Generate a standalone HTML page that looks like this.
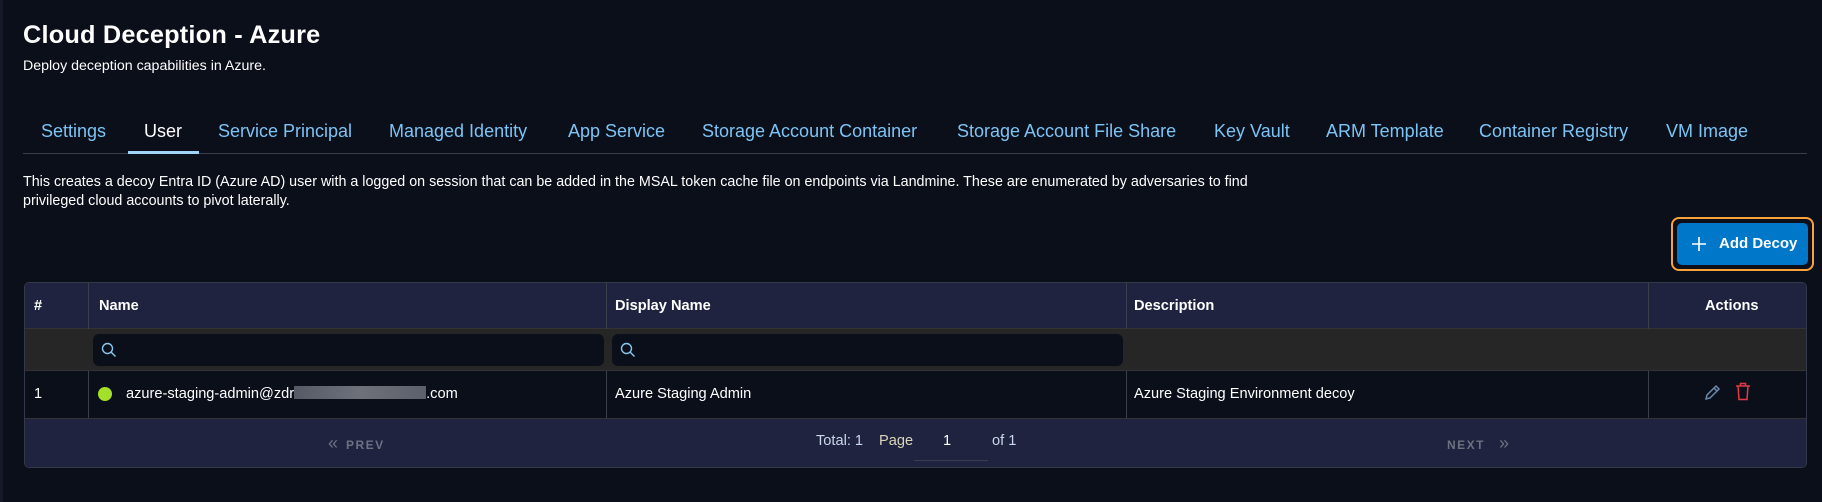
<!DOCTYPE html>
<html><head><meta charset="utf-8"><style>
*{box-sizing:border-box;margin:0;padding:0}
body{width:1822px;height:502px;background:#0b0f1a;color:#fff;font-family:"Liberation Sans",sans-serif;position:relative;overflow:hidden}
.a{position:absolute;white-space:nowrap}
.tab{position:absolute;top:121px;font-size:18px;color:#7cc4f5}
.cell{position:absolute;font-size:14.6px}
</style></head><body>
<div class="a" style="left:0;top:0;width:3px;height:502px;background:#151a28"></div>
<div class="a" style="left:23px;top:21px;font-size:25.3px;font-weight:bold;letter-spacing:0.2px">Cloud Deception - Azure</div>
<div class="a" style="left:23px;top:58px;font-size:14.2px">Deploy deception capabilities in Azure.</div>

<div class="tab" style="left:41px">Settings</div>
<div class="tab" style="left:144px;color:#fff">User</div>
<div class="tab" style="left:218px">Service Principal</div>
<div class="tab" style="left:389px">Managed Identity</div>
<div class="tab" style="left:568px">App Service</div>
<div class="tab" style="left:702px">Storage Account Container</div>
<div class="tab" style="left:957px">Storage Account File Share</div>
<div class="tab" style="left:1214px">Key Vault</div>
<div class="tab" style="left:1326px">ARM Template</div>
<div class="tab" style="left:1479px">Container Registry</div>
<div class="tab" style="left:1666px">VM Image</div>
<div class="a" style="left:23px;top:153px;width:1784px;height:1px;background:#3a3f4c"></div>
<div class="a" style="left:128px;top:151px;width:71px;height:3px;background:#9fd3f7"></div>

<div class="a" style="left:23px;top:173px;font-size:14.3px;line-height:19px">This creates a decoy Entra ID (Azure AD) user with a logged on session that can be added in the MSAL token cache file on endpoints via Landmine. These are enumerated by adversaries to find<br>privileged cloud accounts to pivot laterally.</div>

<div class="a" style="left:1671px;top:217px;width:143px;height:54px;border:2px solid #f7a23b;border-radius:8px"></div>
<div class="a" style="left:1677px;top:223px;width:131px;height:42px;background:#0077c8;border-radius:5px;font-size:15px;font-weight:bold;line-height:42px;padding-left:42px">Add Decoy</div>
<svg class="a" style="left:1691px;top:236px" width="16" height="16" viewBox="0 0 16 16"><path d="M8 1v14M1 8h14" stroke="#fff" stroke-width="1.6"/></svg>

<div class="a" style="left:24px;top:282px;width:1783px;height:186px;border:1px solid #33384a;border-radius:5px;overflow:hidden;background:#0b0f1a">
  <div class="a" style="left:0;top:0;width:100%;height:46px;background:#1f2340;border-bottom:1px solid #333"></div>
  <div class="a" style="left:0;top:46px;width:100%;height:42px;background:#262626;border-bottom:1px solid #333"></div>
  <div class="a" style="left:0;top:135px;width:100%;height:51px;background:#1f2340;border-top:1px solid #333"></div>
  <div class="a" style="left:63px;top:0;width:1px;height:46px;background:#3a3f4c"></div>
  <div class="a" style="left:581px;top:0;width:1px;height:46px;background:#3a3f4c"></div>
  <div class="a" style="left:1101px;top:0;width:1px;height:46px;background:#3a3f4c"></div>
  <div class="a" style="left:1623px;top:0;width:1px;height:46px;background:#3a3f4c"></div>
  <div class="a" style="left:63px;top:88px;width:1px;height:47px;background:#3a3f4c"></div>
  <div class="a" style="left:581px;top:88px;width:1px;height:47px;background:#3a3f4c"></div>
  <div class="a" style="left:1101px;top:88px;width:1px;height:47px;background:#3a3f4c"></div>
  <div class="a" style="left:1623px;top:88px;width:1px;height:47px;background:#3a3f4c"></div>
  <div class="cell a" style="left:9px;top:15px;font-weight:bold">#</div>
  <div class="cell a" style="left:74px;top:15px;font-weight:bold">Name</div>
  <div class="cell a" style="left:590px;top:15px;font-weight:bold">Display Name</div>
  <div class="cell a" style="left:1109px;top:15px;font-weight:bold">Description</div>
  <div class="cell a" style="left:1680px;top:15px;font-weight:bold">Actions</div>
  <div class="a" style="left:68px;top:51px;width:511px;height:32px;background:#0b0f1a;border-radius:6px"></div>
  <div class="a" style="left:587px;top:51px;width:511px;height:32px;background:#0b0f1a;border-radius:6px"></div>
  <svg class="a" style="left:76px;top:59px" width="16" height="16" viewBox="0 0 16 16"><circle cx="6.5" cy="6.5" r="5" fill="none" stroke="#8ac6ee" stroke-width="1.4"/><path d="M10 10l4.5 4.5" stroke="#8ac6ee" stroke-width="1.4"/></svg>
  <svg class="a" style="left:595px;top:59px" width="16" height="16" viewBox="0 0 16 16"><circle cx="6.5" cy="6.5" r="5" fill="none" stroke="#8ac6ee" stroke-width="1.4"/><path d="M10 10l4.5 4.5" stroke="#8ac6ee" stroke-width="1.4"/></svg>
  <div class="cell a" style="left:9px;top:103px">1</div>
  <div class="a" style="left:73px;top:104px;width:14px;height:14px;border-radius:50%;background:#a4e02a"></div>
  <div class="cell a" style="left:101px;top:103px">azure-staging-admin@zdr<span style="display:inline-block;width:132px;height:13px;background:linear-gradient(90deg,#555a66,#6e717a,#5c606a);vertical-align:-1px"></span>.com</div>
  <div class="cell a" style="left:590px;top:103px">Azure Staging Admin</div>
  <div class="cell a" style="left:1109px;top:103px">Azure Staging Environment decoy</div>
  <svg class="a" style="left:1678px;top:101px" width="18" height="18" viewBox="0 0 18 18"><path d="M3 15l1-4L13 2l3 3-9 9z M11 4l3 3" fill="none" stroke="#6a8bb0" stroke-width="1.5"/></svg>
  <svg class="a" style="left:1710px;top:99px" width="16" height="19" viewBox="0 0 16 19"><path d="M1 4h14M5.5 4V1.5h5V4M3 4l1 13.5h8L13 4" fill="none" stroke="#e23b46" stroke-width="1.5"/></svg>
  <div class="a" style="left:303px;top:150px;font-size:18px;color:#6b7280">«</div>
  <div class="a" style="left:321px;top:155px;font-size:12px;font-weight:bold;letter-spacing:1.5px;color:#6b7280">PREV</div>
  <div class="a" style="left:791px;top:150px;font-size:14.6px;color:#c8d8ea">Total: 1</div>
  <div class="a" style="left:854px;top:150px;font-size:14.6px;color:#d8d6b8">Page</div>
  <div class="a" style="left:918px;top:150px;font-size:14.6px">1</div>
  <div class="a" style="left:889px;top:177px;width:74px;height:1px;background:#3a3f4c"></div>
  <div class="a" style="left:967px;top:150px;font-size:14.6px;color:#c8d8ea">of 1</div>
  <div class="a" style="left:1422px;top:155px;font-size:12px;font-weight:bold;letter-spacing:1.5px;color:#6b7280">NEXT</div>
  <div class="a" style="left:1474px;top:150px;font-size:18px;color:#6b7280">»</div>
</div>
</body></html>
